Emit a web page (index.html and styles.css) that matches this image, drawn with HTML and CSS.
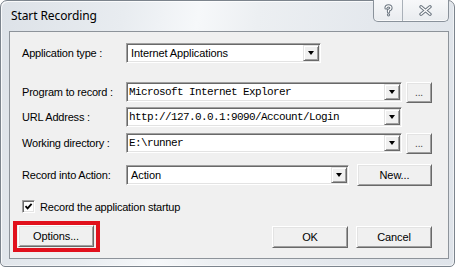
FILE: index.html
```html
<!DOCTYPE html>
<html>
<head>
<meta charset="utf-8">
<link rel="stylesheet" href="styles.css">
</head>
<body>
<div class="window">
  <div class="titlebar">
    <span class="title">Start Recording</span>
    <div class="caption-btns">
      <span class="cap help">
        <svg width="11" height="13" viewBox="0 0 11 13">
          <path d="M3 4 Q3 1.8 5.5 1.8 Q8 1.8 8 4 Q8 5.4 5.5 6.3 V8" fill="none" stroke="#6c7681" stroke-width="3.2" stroke-linecap="round" stroke-linejoin="round"/>
          <circle cx="5.5" cy="10.8" r="1.6" fill="#6c7681"/>
          <path d="M3 4 Q3 1.8 5.5 1.8 Q8 1.8 8 4 Q8 5.4 5.5 6.3 V8" fill="none" stroke="#fff" stroke-width="1.2" stroke-linecap="round" stroke-linejoin="round"/>
          <circle cx="5.5" cy="10.8" r="0.6" fill="#fff"/>
        </svg>
      </span>
      <span class="cap close">
        <svg width="13" height="11" viewBox="0 0 13 11">
          <path d="M2 1.8 L11 9.2 M11 1.8 L2 9.2" stroke="#6c7681" stroke-width="3.4" stroke-linecap="round"/>
          <path d="M2 1.8 L11 9.2 M11 1.8 L2 9.2" stroke="#fff" stroke-width="1.3" stroke-linecap="round"/>
        </svg>
      </span>
    </div>
  </div>
  <div class="client">
    <div class="row r1">
      <span class="lbl">Application type :</span>
      <div class="combo w-type"><span class="val">Internet Applications</span><span class="drop"><i class="tri"></i></span></div>
    </div>
    <div class="row r2">
      <span class="lbl">Program to record :</span>
      <div class="combo w-long"><span class="val mono">Microsoft Internet Explorer</span><span class="drop"><i class="tri"></i></span></div>
      <button class="btn dots">...</button>
    </div>
    <div class="row r3">
      <span class="lbl">URL Address :</span>
      <div class="combo w-long"><span class="val mono">http://127.0.0.1:9090/Account/Login</span><span class="drop"><i class="tri"></i></span></div>
    </div>
    <div class="row r4">
      <span class="lbl">Working directory :</span>
      <div class="combo w-long"><span class="val mono">E:\runner</span><span class="drop"><i class="tri"></i></span></div>
      <button class="btn dots">...</button>
    </div>
    <div class="row r5">
      <span class="lbl">Record into Action:</span>
      <div class="combo w-action"><span class="val">Action</span><span class="drop"><i class="tri"></i></span></div>
      <button class="btn new">New...</button>
    </div>
    <div class="chk-row">
      <span class="chk">
        <svg width="9" height="9" viewBox="0 0 9 9"><path d="M1.5 4.2 L3.6 6.4 L7.6 1.8" fill="none" stroke="#000" stroke-width="1.8"/></svg>
      </span>
      <span class="chk-lbl">Record the application startup</span>
    </div>
    <div class="bottom-row">
      <div class="redbox"><button class="btn std">Options...</button></div>
      <div class="actions">
        <button class="btn std">OK</button>
        <button class="btn std">Cancel</button>
      </div>
    </div>
  </div>
</div>
</body>
</html>
```
FILE: styles.css
```css
html, body {
  margin: 0;
  padding: 0;
  background: #ffffff;
}

.window {
  box-sizing: border-box;
  width: 455px;
  height: 267px;
  border: 1px solid #7c848d;
  border-radius: 7px 7px 5px 5px;
  padding: 0 5px 7px 8px;
  display: flex;
  flex-direction: column;
  background: linear-gradient(100deg, #dde2e8 0%, #e8ecf0 25%, #f6f8fa 40%, #eceff2 52%, #e4e8ed 75%, #dfe4ea 100%);
  box-shadow: inset 1px 1px 0 rgba(255,255,255,0.8), inset -1px -1px 0 rgba(255,255,255,0.5);
  font-family: "Liberation Sans", Arial, sans-serif;
  font-size: 11px;
  color: #000;
}

.titlebar {
  height: 30px;
  display: flex;
  justify-content: space-between;
  align-items: flex-start;
}

.title {
  font-family: "Noto Sans", "Open Sans", sans-serif;
  font-size: 12px;
  line-height: 16px;
  padding: 7px 0 0 2px;
  color: #000;
  letter-spacing: -0.1px;
}

.caption-btns {
  display: flex;
  height: 21px;
  margin-top: -1px;
  border: 1px solid #8a929b;
  border-top: none;
  border-radius: 0 0 5px 5px;
  background: linear-gradient(#f7f8fa, #e9ecef);
  box-shadow: inset 0 -1px 0 rgba(255,255,255,0.7);
}

.cap {
  display: flex;
  align-items: center;
  justify-content: center;
}

.cap.help {
  width: 28px;
  border-right: 1px solid #a9b0b8;
}

.cap.close {
  width: 45px;
}

.client {
  flex: 1;
  box-sizing: border-box;
  border: 1px solid #8d939a;
  background: #f0f0f0;
  padding: 11px 16px 0 12px;
  display: flex;
  flex-direction: column;
}

.row {
  display: flex;
  align-items: center;
  height: 20px;
}

.r2 { margin-top: 19px; }
.r3 { margin-top: 5px; }
.r4 { margin-top: 6px; }
.r5 { margin-top: 12px; }

.lbl {
  width: 104px;
  flex: none;
  letter-spacing: -0.2px;
  white-space: nowrap;
}

.combo {
  box-sizing: border-box;
  height: 20px;
  flex: none;
  display: flex;
  align-items: center;
  background: #fff;
  border: 1px solid;
  border-color: #a0a0a0 #ffffff #ffffff #a0a0a0;
  box-shadow: inset 1px 1px 0 #696969, inset -1px -1px 0 #e3e3e3;
  padding: 1px;
}

.w-type { width: 195px; }
.w-long { width: 276px; }
.w-action { width: 223px; }

.val {
  flex: 1;
  padding-left: 3px;
  white-space: nowrap;
  overflow: hidden;
  letter-spacing: -0.1px;
}

.val.mono {
  padding-left: 1px;
  font-family: "Liberation Mono", "Courier New", monospace;
  font-size: 11px;
  letter-spacing: -0.6px;
}

.drop {
  box-sizing: border-box;
  width: 16px;
  height: 16px;
  flex: none;
  display: flex;
  align-items: center;
  justify-content: center;
  background: #f0f0f0;
  border: 1px solid;
  border-color: #e3e3e3 #696969 #696969 #e3e3e3;
  box-shadow: inset 1px 1px 0 #ffffff, inset -1px -1px 0 #a0a0a0;
}

.tri {
  width: 0;
  height: 0;
  border-left: 3.5px solid transparent;
  border-right: 3.5px solid transparent;
  border-top: 4px solid #000;
}

.btn {
  box-sizing: border-box;
  font-family: "Liberation Sans", Arial, sans-serif;
  font-size: 11px;
  color: #000;
  background: #f0f0f0;
  border: 1px solid;
  border-color: #ffffff #696969 #696969 #ffffff;
  box-shadow: inset 1px 1px 0 #e3e3e3, inset -1px -1px 0 #a0a0a0;
  padding: 0;
  margin: 0;
  flex: none;
  letter-spacing: -0.1px;
}

.dots {
  width: 26px;
  height: 21px;
  margin-left: 4px;
  font-size: 10px;
  color: #444;
}

.new {
  width: 75px;
  height: 22px;
  margin-left: 8px;
}

.std {
  width: 76px;
  height: 22px;
}

.chk-row {
  display: flex;
  align-items: center;
  height: 13px;
  margin-top: 15px;
}

.chk {
  box-sizing: border-box;
  width: 13px;
  height: 13px;
  background: #fff;
  border: 1px solid;
  border-color: #a0a0a0 #ffffff #ffffff #a0a0a0;
  box-shadow: inset 1px 1px 0 #696969, inset -1px -1px 0 #e3e3e3;
  display: flex;
  align-items: center;
  justify-content: center;
}

.chk-lbl {
  margin-left: 5px;
  letter-spacing: -0.2px;
}

.bottom-row {
  display: flex;
  align-items: center;
  justify-content: space-between;
  margin-top: 8px;
  margin-left: -9px;
}

.redbox {
  border: 4px solid #e1101c;
  padding: 0 2px 1px 1px;
  display: flex;
}

.actions {
  display: flex;
  gap: 8px;
  margin-top: 1px;
}
```
